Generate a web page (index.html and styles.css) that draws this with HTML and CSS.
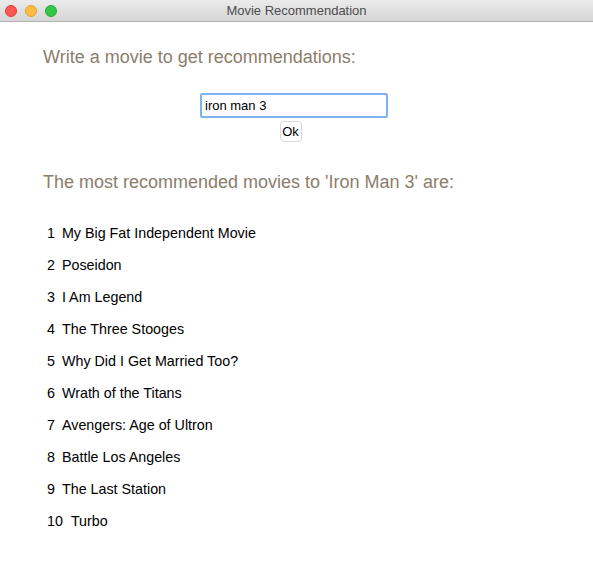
FILE: index.html
```html
<!DOCTYPE html>
<html>
<head>
<meta charset="utf-8">
<link rel="stylesheet" href="styles.css">
</head>
<body>
<div class="window">
  <div class="titlebar">
    <div class="lights">
      <span class="light red"></span>
      <span class="light yellow"></span>
      <span class="light green"></span>
    </div>
    <div class="title">Movie Recommendation</div>
  </div>
  <div class="content">
    <h1 class="heading first">Write a movie to get recommendations:</h1>
    <div class="form">
      <input class="movie-input" type="text" value="iron man 3">
      <button class="ok">Ok</button>
    </div>
    <h2 class="heading second">The most recommended movies to 'Iron Man 3' are:</h2>
    <ol class="list">
      <li><span class="num">1</span><span class="name">My Big Fat Independent Movie</span></li>
      <li><span class="num">2</span><span class="name">Poseidon</span></li>
      <li><span class="num">3</span><span class="name">I Am Legend</span></li>
      <li><span class="num">4</span><span class="name">The Three Stooges</span></li>
      <li><span class="num">5</span><span class="name">Why Did I Get Married Too?</span></li>
      <li><span class="num">6</span><span class="name">Wrath of the Titans</span></li>
      <li><span class="num">7</span><span class="name">Avengers: Age of Ultron</span></li>
      <li><span class="num">8</span><span class="name">Battle Los Angeles</span></li>
      <li><span class="num">9</span><span class="name">The Last Station</span></li>
      <li><span class="num">10</span><span class="name wide">Turbo</span></li>
    </ol>
  </div>
</div>
</body>
</html>
```
FILE: styles.css
```css
html, body {
  margin: 0;
  padding: 0;
  background: #ffffff;
}
body {
  font-family: "Liberation Sans", Arial, sans-serif;
  width: 593px;
  height: 567px;
  overflow: hidden;
}
.window {
  display: flex;
  flex-direction: column;
  height: 567px;
}
.titlebar {
  position: relative;
  height: 21px;
  background: linear-gradient(#ebebeb, #d5d5d5);
  border-bottom: 1px solid #b1b1b1;
  display: flex;
  align-items: center;
  justify-content: center;
}
.lights {
  position: absolute;
  left: 5px;
  top: 5px;
  display: flex;
  gap: 8px;
}
.light {
  width: 12px;
  height: 12px;
  border-radius: 50%;
  box-sizing: border-box;
}
.red { background: #fc5753; border: 1px solid #de3f3a; }
.yellow { background: #fdbc40; border: 1px solid #dea236; }
.green { background: #33c748; border: 1px solid #27aa35; }
.title {
  font-family: "Helvetica Neue", "Liberation Sans", Arial, sans-serif;
  font-size: 13px;
  color: #4d4d4d;
}
.content {
  padding: 0 0 0 43px;
}
.heading {
  font-weight: normal;
  font-size: 18px;
  color: #8b7d6b;
  margin: 0;
}
.first {
  margin-top: 25px;
}
.form {
  display: flex;
  flex-direction: column;
  align-items: center;
  margin-top: 25px;
  margin-left: -55px;
}
.movie-input {
  width: 188px;
  height: 25px;
  box-sizing: border-box;
  border: 2px solid #7eb3ee;
  border-radius: 2px;
  padding: 0 3px;
  font-family: "Liberation Sans", Arial, sans-serif;
  font-size: 13px;
  color: #000;
  outline: none;
  margin-left: 7px;
}
.ok {
  margin-top: 3px;
  height: 21px;
  width: 22px;
  padding: 0;
  font-family: "Liberation Sans", Arial, sans-serif;
  font-size: 13px;
  background: #fff;
  border: 1px solid #d9d9d9;
  border-radius: 4px;
  color: #000;
}
.second {
  margin-top: 30px;
}
.list {
  list-style: none;
  margin: 32px 0 0 4px;
  padding: 0;
  display: flex;
  flex-direction: column;
  gap: 15px;
}
.list li {
  font-size: 14.3px;
  line-height: 17px;
  color: #000;
  display: flex;
}
.num {
  margin-right: 7px;
}
.wide {
  margin-left: 1px;
}
```
